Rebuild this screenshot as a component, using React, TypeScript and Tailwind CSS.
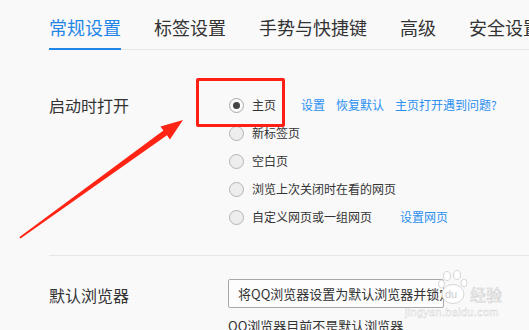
const tabs = ['常规设置', '标签设置', '手势与快捷键', '高级', '安全设置'];

interface StartOption {
  label: string;
  checked?: boolean;
  links?: string[];
}

const startOptions: StartOption[] = [
  { label: '主页', checked: true, links: ['设置', '恢复默认', '主页打开遇到问题?'] },
  { label: '新标签页' },
  { label: '空白页' },
  { label: '浏览上次关闭时在看的网页' },
  { label: '自定义网页或一组网页', links: ['设置网页'] },
];

function Radio({ checked }: { checked?: boolean }) {
  return (
    <span
      className={
        checked
          ? 'flex h-[15px] w-[15px] shrink-0 items-center justify-center rounded-full border border-[#a9a9a9] bg-[#fbfbfb]'
          : 'h-[15px] w-[15px] shrink-0 rounded-full border border-[#b4b4b4] bg-[#ededed]'
      }
    >
      {checked && <span className="h-[7px] w-[7px] rounded-full bg-[#454545]" />}
    </span>
  );
}

// faint baidu jingyan stamp in the corner
function Watermark() {
  return (
    <>
      <div className="pointer-events-none absolute left-[437px] top-[270px] flex items-end gap-[1px]">
        <svg width="32" height="36" viewBox="0 0 32 36">
          <g fill="#ffffff" stroke="#d6d6d6" strokeWidth="1">
            <ellipse cx="10" cy="6" rx="3.5" ry="4.5" />
            <ellipse cx="20" cy="5" rx="3.5" ry="4.5" />
            <ellipse cx="4.5" cy="14" rx="3" ry="4" />
            <ellipse cx="27" cy="13" rx="3" ry="4" />
            <ellipse cx="16" cy="24" rx="11" ry="9.5" />
          </g>
          <text x="8" y="28" fontSize="11" fill="#cccccc" fontFamily="Liberation Sans, sans-serif">
            du
          </text>
        </svg>
        <span className="mb-[4px] text-[16px] leading-none text-white [-webkit-text-stroke:0.6px_#d0d0d0] [font-family:'Noto_Sans_CJK_SC',sans-serif]">
          经验
        </span>
      </div>
      <span className="pointer-events-none absolute left-[405px] top-[307px] text-[11px] leading-none tracking-[0.3px] text-white [-webkit-text-stroke:0.4px_#d4d4d4] [font-family:'Liberation_Sans',sans-serif]">
        jingyan.baidu.com
      </span>
    </>
  );
}

export default function App() {
  return (
    <div className="relative h-[330px] w-[529px] overflow-hidden bg-[#f9f9f9] text-[#333333] [font-family:'Noto_Sans_CJK_SC','Noto_Sans',sans-serif]">
      <div className="ml-[49px] flex h-[50px] items-end gap-[33px] whitespace-nowrap border-b border-[#e6e6e6]">
        {tabs.map((tab, i) => (
          <div
            key={tab}
            className={
              i === 0
                ? '-mb-px border-b-2 border-[#1f86e8] pb-[9px] text-[18px] leading-[24px] text-[#1f86e8]'
                : 'pb-[10px] text-[18px] leading-[24px] text-[#333333]'
            }
          >
            {tab}
          </div>
        ))}
      </div>

      <div className="ml-[49px] mt-[41px] flex">
        <div className="w-[180px] shrink-0 text-[16px] leading-[28px]">启动时打开</div>
        <div className="flex flex-col">
          {startOptions.map((opt) => (
            <div key={opt.label} className="flex h-[28px] items-center">
              <Radio checked={opt.checked} />
              <span className="ml-[8px] text-[12px] text-[#333333]">{opt.label}</span>
              {opt.links && (
                <div className={opt.checked ? 'ml-[25px] flex gap-[11px]' : 'ml-[28px] flex gap-[11px]'}>
                  {opt.links.map((l) => (
                    <span key={l} className="whitespace-nowrap text-[12px] text-[#2b8ff0]">
                      {l}
                    </span>
                  ))}
                </div>
              )}
            </div>
          ))}
        </div>
      </div>

      <div className="ml-[49px] mt-[24px] border-t border-[#e6e6e6]" />

      <div className="ml-[49px] mt-[23px] flex">
        <div className="w-[179px] shrink-0 pt-[2px] text-[16px] leading-[28px]">默认浏览器</div>
        <div className="flex flex-col">
          <div className="flex h-[29px] w-[216px] items-center overflow-hidden whitespace-nowrap rounded-[2px] border border-[#a8a8a8] bg-[#fdfdfd] pl-[9px] text-[13px] text-[#333333]">
            将QQ浏览器设置为默认浏览器并锁定
          </div>
          <div className="mt-[8px] whitespace-nowrap text-[13px] text-[#333333]">QQ浏览器目前不是默认浏览器</div>
        </div>
      </div>

      <Watermark />

      <div className="absolute left-[196px] top-[78px] h-[49px] w-[89px] rounded-[2px] border-[3px] border-[#ff1f14]" />

      <svg className="pointer-events-none absolute left-0 top-0" width="529" height="330">
        <polygon
          points="20,238 19.5,237 163.4,130.5 160.5,126.4 183,120 169.9,139.4 167,135.3 20.5,238.6"
          fill="#ff2414"
        />
      </svg>
    </div>
  );
}
